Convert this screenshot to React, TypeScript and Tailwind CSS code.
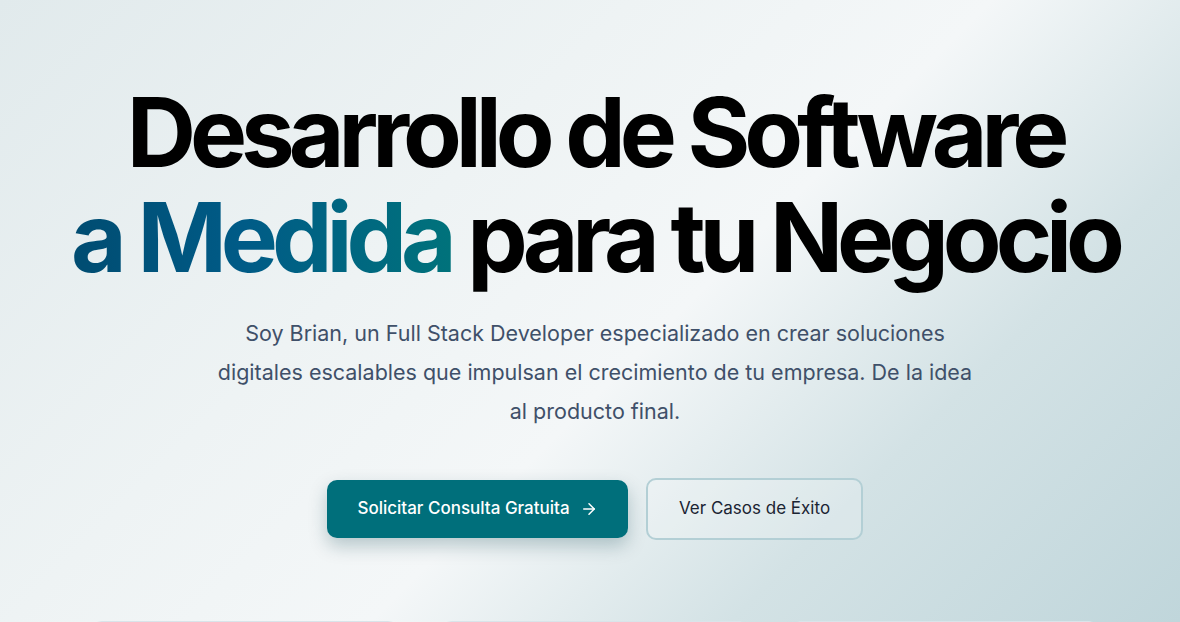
import React from "react";

export default function App() {
  return (
    <div
      className="relative h-[622px] w-full overflow-hidden bg-[linear-gradient(135deg,#e1eaec_0%,#eef3f4_35%,#f4f7f8_55%,#d3e2e5_75%,#c0d6db_100%)]"
      style={{ fontFamily: "Inter, 'Noto Sans', sans-serif" }}
    >
      <section className="flex flex-col items-center pl-[10px] pt-[80px] text-center">
        <h1 className="text-[96px] font-bold leading-[105px] tracking-[-0.063em] text-black">
          Desarrollo de Software
          <br />
          <span className="bg-[linear-gradient(90deg,#004c71_0%,#005b87_45%,#00727b_100%)] bg-clip-text text-transparent">
            a Medida
          </span>{" "}
          para tu Negocio
        </h1>
        <p className="mt-[24px] max-w-[765px] text-[21.5px] leading-[39px] text-[#3f5069]">
          Soy Brian, un Full Stack Developer especializado en crear soluciones
          digitales escalables que impulsan el crecimiento de tu empresa. De la idea
          al producto final.
        </p>
        <div className="mt-[47px] flex items-center gap-[18px]">
          <button className="flex h-[58px] w-[301px] items-center justify-center gap-[10px] rounded-[10px] bg-[#006f7b] text-[17px] font-medium text-white shadow-[0_8px_18px_rgba(0,60,70,0.25)]">
            Solicitar Consulta Gratuita
            <svg width="18" height="18" viewBox="0 0 24 24" fill="none" stroke="currentColor" strokeWidth="2" strokeLinecap="round" strokeLinejoin="round">
              <path d="M5 12h14" />
              <path d="m12 5 7 7-7 7" />
            </svg>
          </button>
          <button className="flex h-[62px] w-[217px] items-center justify-center rounded-[10px] border-2 border-[#b3cfd5] bg-white/20 text-[17px] font-normal text-[#1b2433]">
            Ver Casos de Éxito
          </button>
        </div>
        <div className="mt-[81px] grid w-[1010px] grid-cols-3 gap-10">
          <div className="h-[120px] rounded-xl border border-[#d9e4ea] bg-[#f2f6f8]" />
          <div className="h-[120px] rounded-xl border border-[#d9e4ea] bg-[#f2f6f8]" />
          <div className="h-[120px] rounded-xl border border-[#d9e4ea] bg-[#f2f6f8]" />
        </div>
      </section>
    </div>
  );
}
